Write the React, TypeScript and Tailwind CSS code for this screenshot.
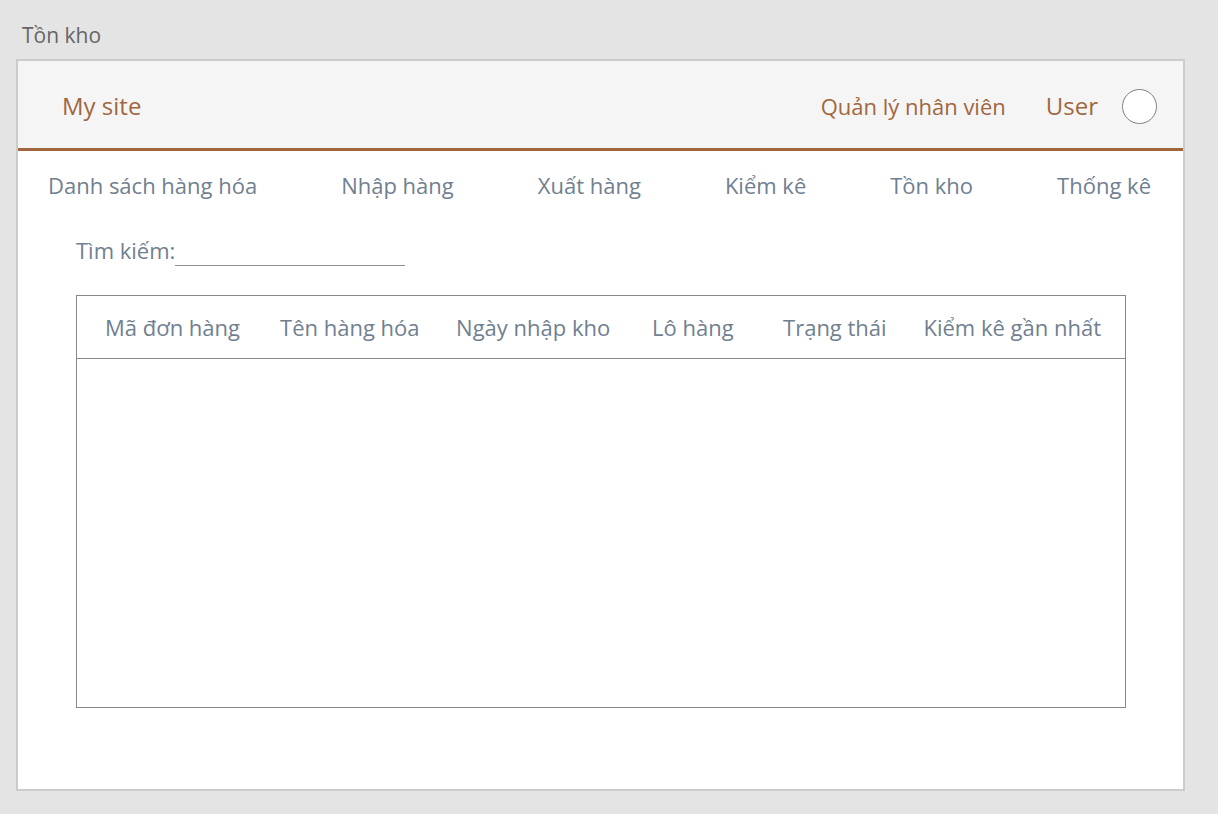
const navItems = [
  "Danh sách hàng hóa",
  "Nhập hàng",
  "Xuất hàng",
  "Kiểm kê",
  "Tồn kho",
  "Thống kê",
];

const columns = [
  { label: "Mã đơn hàng", width: "w-[16.7%]" },
  { label: "Tên hàng hóa", width: "w-[16.8%]" },
  { label: "Ngày nhập kho", width: "w-[18.7%]" },
  { label: "Lô hàng", width: "w-[12.5%]" },
  { label: "Trạng thái", width: "w-[13.4%]" },
  { label: "Kiểm kê gần nhất", width: "w-[21.9%]" },
];

export default function App() {
  return (
    <div className="flex min-h-screen flex-col bg-[#e4e4e4] pt-[19px] pr-[33px] pb-[23px] pl-4 font-['Open_Sans','Noto_Sans',sans-serif] text-[22px] leading-8 text-[#708090]">
      <h1 className="h-10 pl-[6px] text-[21px] text-[#666666]">Tồn kho</h1>
      <main className="flex flex-1 flex-col border-2 border-[#cccccc] bg-white">
        <header className="flex h-[90px] items-center border-b-3 border-[#a0673f] bg-[#f5f5f5] pt-[3px] pr-[26px] pl-11 text-[#a0673f]">
          <a href="#" className="text-2xl">My site</a>
          <a href="#" className="ml-auto">Quản lý nhân viên</a>
          <a href="#" className="ml-10 text-2xl">User</a>
          <button type="button" aria-label="User" className="ml-6 size-[35px] rounded-full border border-[#808080] bg-white" />
        </header>
        <nav className="flex justify-between pt-[18px] pr-8 pl-[30px]">
          {navItems.map((item) => (
            <a key={item} href="#">{item}</a>
          ))}
        </nav>
        <div className="mx-[58px] mt-[33px] flex items-center">
          <label htmlFor="search">Tìm kiếm:</label>
          <input id="search" type="text" className="h-8 w-[230px] border-b border-[#909090] outline-none" />
        </div>
        <div className="mt-[29px] mr-[57px] mb-[81px] ml-[58px] flex-1 border border-[#888888]">
          <table className="w-full table-fixed">
            <thead>
              <tr className="h-[62px] border-b border-[#888888]">
                {columns.map((column) => (
                  <th key={column.label} className={`${column.width} pl-7 text-left font-normal whitespace-nowrap`}>
                    {column.label}
                  </th>
                ))}
              </tr>
            </thead>
            <tbody />
          </table>
        </div>
      </main>
    </div>
  );
}
